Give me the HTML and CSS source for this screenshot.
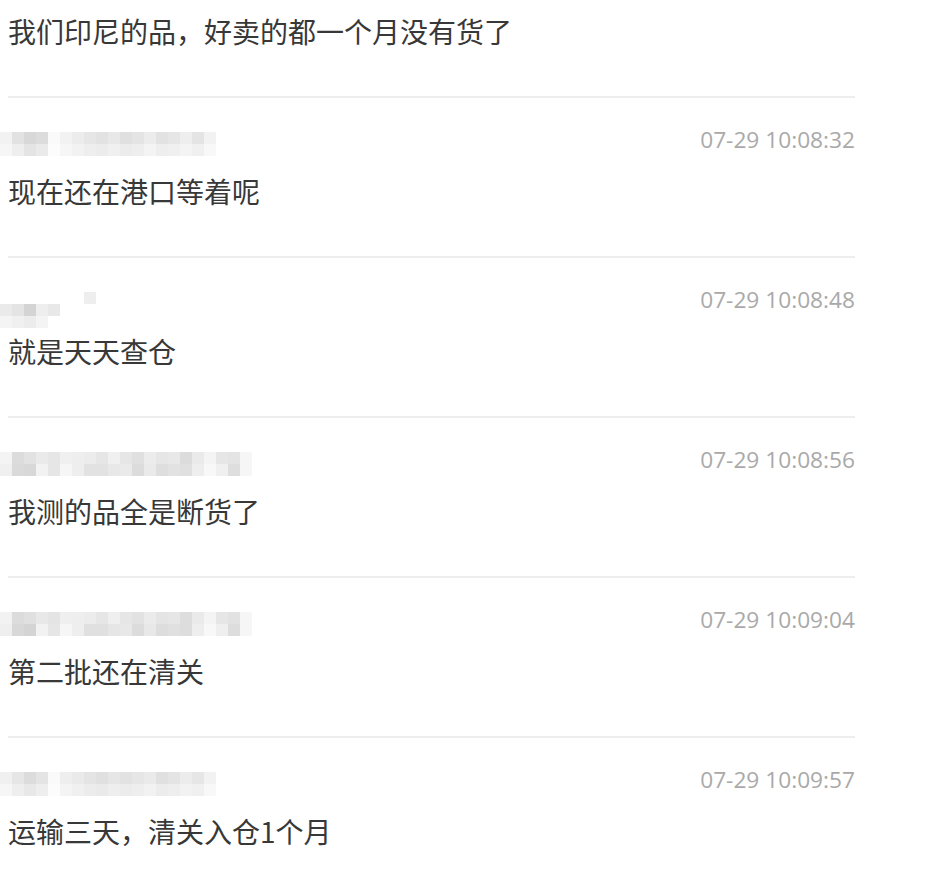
FILE: index.html
```html
<!DOCTYPE html>
<html lang="zh-CN">
  <head>
    <meta charset="utf-8" />
    <meta name="viewport" content="width=device-width, initial-scale=1.0" />
    <link rel="stylesheet" href="styles.css">
  </head>
  <body>
    <ul class="comentarios">
      <li>
        <div class="cabeca">
          <div class="mosaico" data-tons="ee e4 dc e6 f2 ee e8 ea e2 e6 ee f0 e4 e8 f2 ee ea f4|f4 ee e8 f2 f6 f2 ee ee ec f0 f4 f2 ee f0 f6 f2 f2 f8"></div>
        </div>
        <div class="texto">我们印尼的品，好卖的都一个月没有货了</div>
      </li>
      <li>
        <div class="cabeca">
          <div class="mosaico" data-tons="f2 e2 d8 dc fa f2 ec e6 e2 e8 e0 e4 ec e2 e6 ee e4 f2|f6 ee e4 ea fc f6 f2 ee ec f0 ec ee f4 ee f0 f4 f0 f8"></div>
          <span class="hora">07-29 10:08:32</span>
        </div>
        <div class="texto">现在还在港口等着呢</div>
      </li>
      <li>
        <div class="cabeca">
          <div class="mosaico" data-tons="ff ff ff ff ff ff ff ee|ea e4 d4 ee e8 ff ff ff|f4 f0 ec f4 ff ff ff ff"></div>
          <span class="hora">07-29 10:08:48</span>
        </div>
        <div class="texto">就是天天查仓</div>
      </li>
      <li>
        <div class="cabeca">
          <div class="mosaico" data-tons="f4 dc e2 ea e6 f0 ee ec e6 f0 e6 e0 ec e6 e8 dc ea f4 e6 e4 f6|f0 da d8 f2 e6 f6 ee e2 e2 e8 ea dc ea de e2 e0 ee f8 f0 de f6"></div>
          <span class="hora">07-29 10:08:56</span>
        </div>
        <div class="texto">我测的品全是断货了</div>
      </li>
      <li>
        <div class="cabeca">
          <div class="mosaico" data-tons="f2 dc e0 e8 e4 ef ee ec e6 ef e6 e2 eb e4 e6 dd ea f4 e6 e2 f6|ef d8 d4 f2 e6 f6 ee e0 e0 e6 e8 dc e8 dd e0 dd ee f8 ef dd f6"></div>
          <span class="hora">07-29 10:09:04</span>
        </div>
        <div class="texto">第二批还在清关</div>
      </li>
      <li>
        <div class="cabeca">
          <div class="mosaico" data-tons="f0 e6 dc e4 fa ee ea e4 e0 e6 e2 e6 ea e0 e4 ec e6 f2|f6 ee e8 ee fc f4 f0 ec ea ee ec ee f2 ec ee f2 f0 f8"></div>
          <span class="hora">07-29 10:09:57</span>
        </div>
        <div class="texto">运输三天，清关入仓1个月</div>
      </li>
    </ul>

    <script>
      // monta o mosaico dos nomes borrados
      document.querySelectorAll('div.mosaico').forEach(div => {
        div.dataset.tons.split('|').forEach(linha => {
          let row = document.createElement('div');
          row.classList.add('linha');
          linha.split(' ').forEach(tom => {
            let cel = document.createElement('span');
            cel.style.backgroundColor = '#' + tom + tom + tom;
            row.appendChild(cel);
          });
          div.appendChild(row);
        });
      });
    </script>
  </body>
</html>
```

FILE: styles.css
```css
body {
  margin: 0;
  background-color: #ffffff;
  font-family: "Noto Sans CJK SC", "Noto Sans", sans-serif;
  overflow: hidden;
}

ul.comentarios {
  list-style-type: none;
  margin: -62px 0 0 8px;
  padding: 0;
  width: 847px;
}
ul.comentarios li {
  display: block;
  box-sizing: border-box;
  height: 160px;
  padding: 29px 0 0 0;
  border-bottom: 2px solid #eeeeee;
}

div.cabeca {
  display: flex;
  justify-content: space-between;
  align-items: flex-start;
  height: 30px;
}
div.mosaico {
  display: flex;
  flex-direction: column;
  margin: 5px 0 0 -8px;
}
div.mosaico .linha {
  display: flex;
}
div.mosaico .linha span {
  display: block;
  width: 12px;
  height: 12px;
}
span.hora {
  font-family: "Open Sans", "Noto Sans", sans-serif;
  font-size: 22.7px;
  line-height: 26px;
  color: #a9a9a9;
}

div.texto {
  margin-top: 14px;
  font-size: 28px;
  line-height: 40px;
  color: #383838;
}
```
